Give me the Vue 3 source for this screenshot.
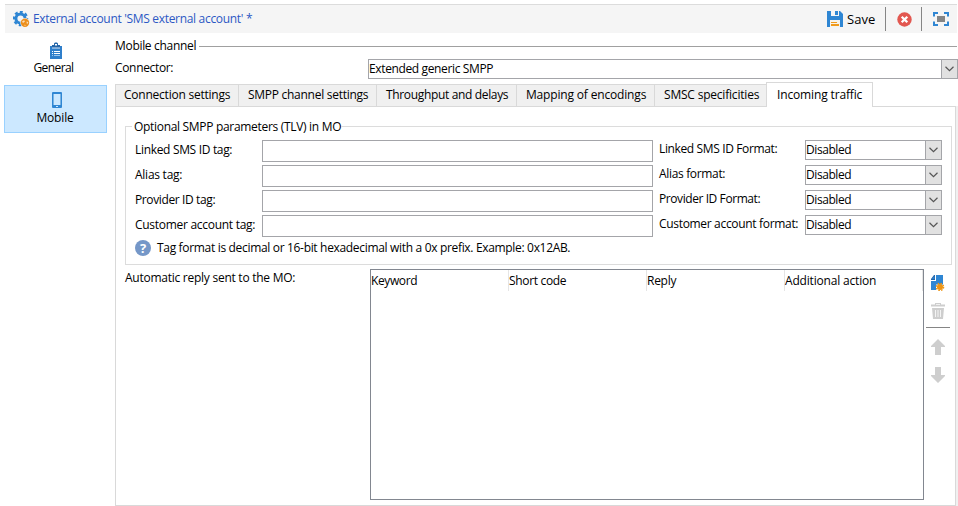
<script setup>
const tabs = [
  { label: 'Connection settings', fit: 106, width: 123 },
  { label: 'SMPP channel settings', fit: 120, width: 138 },
  { label: 'Throughput and delays', fit: 122, width: 140 },
  { label: 'Mapping of encodings', fit: 120, width: 138 },
  { label: 'SMSC specificities', fit: 95, width: 112 },
  { label: 'Incoming traffic', fit: 85, width: 107, active: true },
]
const rows = [
  { tag: 'Linked SMS ID tag:', tagFit: 97, format: 'Linked SMS ID Format:', formatFit: 118 },
  { tag: 'Alias tag:', tagFit: 47, format: 'Alias format:', formatFit: 66 },
  { tag: 'Provider ID tag:', tagFit: 80, format: 'Provider ID Format:', formatFit: 101 },
  { tag: 'Customer account tag:', tagFit: 120, format: 'Customer account format:', formatFit: 139 },
]
const columns = [
  { label: 'Keyword', fit: 46 },
  { label: 'Short code', fit: 57 },
  { label: 'Reply', fit: 29 },
  { label: 'Additional action', fit: 91 },
]

// Spreads or tightens the letters so that the text takes the given width.
const vFit = {
  mounted(el, { value }) {
    const natural = el.getBoundingClientRect().width
    el.style.letterSpacing = `${(value + 0.2 - natural) / el.textContent.length}px`
  },
}
</script>

<template>
  <div class="window">
    <header class="toolbar">
      <svg class="gear" width="17" height="17" viewBox="0 0 17 17">
        <circle cx="7.5" cy="7.5" r="4.600" fill="none" stroke="#2f86d3" stroke-width="3" />
        <circle cx="7.5" cy="7.5" r="6.500" fill="none" stroke="#2f86d3" stroke-width="2.400" stroke-dasharray="2.900 2.205" stroke-dashoffset="1.450" />
        <circle cx="12" cy="11.800" r="4.700" fill="#f5f5f5" />
        <circle cx="12" cy="11.800" r="4.200" fill="#ec8f1c" />
        <path d="M9 10.500l2-1.200 1 .9-1.200 1.600-1.300-.3zM13.500 10.500l1.800.5-.4 1.600-1 .2zM11 13.800l1.600.2-.4 1.200z" fill="#fbdcb4" />
      </svg>
      <span class="title"><span v-fit="219" class="t">External account 'SMS external account' *</span></span>
      <div class="actions">
        <svg class="save-icon" width="16" height="16" viewBox="0 0 16 16">
          <path d="M0 0h13l3 3v13H0z" fill="#2f86d3" />
          <path d="M4 0h8v5H4z" fill="#f5f5f5" />
          <path d="M8 0h3v4H8z" fill="#2f86d3" />
          <path d="M3 9h10v7H3z" fill="#f8f4ec" />
          <path d="M4 11h6v1H4zM4 13h8v2H4z" fill="#f09a1c" />
        </svg>
        <span v-fit="28" class="t save">Save</span>
        <i class="divider"></i>
        <svg class="close" width="15" height="15" viewBox="0 0 15 15">
          <circle cx="7.5" cy="7.5" r="7.200" fill="#e25750" />
          <path d="M4.700 4.700l5.600 5.600M10.300 4.700l-5.600 5.600" stroke="#fff" stroke-width="2.300" />
        </svg>
        <i class="divider"></i>
        <svg class="expand" width="16" height="14" viewBox="0 0 16 14">
          <path d="M1 4.500V1h4M11 1h4v3.500M15 9.500V13h-4M5 13H1V9.500" fill="none" stroke="#2f86d3" stroke-width="2" />
          <path d="M4 4h8v6H4z" fill="#858585" />
        </svg>
      </div>
    </header>

    <div class="body">
      <nav class="side">
        <div class="tile">
          <svg width="12" height="17" viewBox="0 0 12 17">
            <path d="M0 4h12v13H0z" fill="#2f7fcb" />
            <path d="M2 3h2V1.500L5 .5h2l1 1V3h2v3H2z" fill="#2465a8" />
            <path d="M5 2h2v1.500H5z" fill="#fff" />
            <path d="M2 5.500h8v1H2z" fill="#d9e9f8" />
            <path d="M2 9h1v1H2zM4 9h6v1H4zM2 11h1v1H2zM4 11h6v1H4z" fill="#fff" />
            <path d="M2 13h1v1H2zM4 13h6v1H4z" fill="#9cc6ec" />
          </svg>
          <span v-fit="40" class="t">General</span>
        </div>
        <div class="tile selected">
          <svg width="10" height="16" viewBox="0 0 10 16">
            <rect width="10" height="16" rx="1" fill="#2f86d3" />
            <path d="M1 2h8v11H1z" fill="#cce8ff" />
            <path d="M1 2h1v11H1zM8 2h1v11H8z" fill="#78b3e4" />
            <path d="M4 14h2v1H4z" fill="#cce8ff" />
          </svg>
          <span v-fit="37" class="t">Mobile</span>
        </div>
      </nav>

      <main class="main">
        <div class="section"><span v-fit="81" class="t">Mobile channel</span><i></i></div>
        <div class="connector">
          <span v-fit="58" class="t">Connector:</span>
          <div class="select wide">
            <span class="value"><span v-fit="124" class="t">Extended generic SMPP</span></span>
            <span class="arrow"><svg width="9" height="6" viewBox="0 0 9 6"><path d="M.5 .8L4.500 4.600 8.500 .8" /></svg></span>
          </div>
        </div>

        <div class="tabs">
          <div v-for="tab in tabs" :key="tab.label" class="tab" :class="{ active: tab.active }" :style="{ width: tab.width + 'px' }">
            <span v-fit="tab.fit" class="t">{{ tab.label }}</span>
          </div>
        </div>

        <div class="panel-wrap">
          <div class="panel">
            <section class="group">
              <div class="legend"><i class="lead"></i><span v-fit="207" class="t">Optional SMPP parameters (TLV) in MO</span><i class="rest"></i></div>
              <div class="group-body">
                <div v-for="row in rows" :key="row.tag" class="row">
                  <div class="tag"><span v-fit="row.tagFit" class="t">{{ row.tag }}</span></div>
                  <div class="input"></div>
                  <div class="format"><span v-fit="row.formatFit" class="t">{{ row.format }}</span></div>
                  <div class="select">
                    <span class="value"><span v-fit="45" class="t">Disabled</span></span>
                    <span class="arrow"><svg width="9" height="6" viewBox="0 0 9 6"><path d="M.5 .8L4.500 4.600 8.500 .8" /></svg></span>
                  </div>
                </div>
                <div class="hint">
                  <span class="help">?</span>
                  <span v-fit="413" class="t">Tag format is decimal or 16-bit hexadecimal with a 0x prefix. Example: 0x12AB.</span>
                </div>
              </div>
            </section>

            <section class="replies">
              <div class="reply-label"><span v-fit="170" class="t">Automatic reply sent to the MO:</span></div>
              <div class="table">
                <div v-for="column in columns" :key="column.label" class="column"><span v-fit="column.fit" class="t">{{ column.label }}</span></div>
              </div>
              <div class="tools">
                <svg class="add" width="14" height="16" viewBox="0 0 14 16">
                  <path d="M5 0h7v15H0V6h5z" fill="#2f86d3" />
                  <path d="M4 0v5H0V4l3-4z" fill="#2465a8" />
                  <path d="M1 4l2.500-3v3z" fill="#2f86d3" />
                  <path d="M5 9h9v7H5z" fill="#fff" />
                  <path d="M5 9h7v1H5z" fill="#8dbce6" />
                  <circle cx="9" cy="12" r="3" fill="#ee9412" />
                  <circle cx="9" cy="12" r="3.600" fill="none" stroke="#ee9412" stroke-width="1.400" stroke-dasharray="1.500 1.327" />
                </svg>
                <svg class="trash" width="14" height="16" viewBox="0 0 14 16">
                  <path d="M0 1.500h4V0h6v1.500h4v2H0zM1 5h12l-1 11H2z" fill="#cecece" />
                  <path d="M5 1h4v.700H5z" fill="#fff" />
                  <path d="M4.500 7v7M7 7v7M9.500 7v7" stroke="#f4f4f4" stroke-width="1" />
                </svg>
                <i class="rule"></i>
                <svg class="up" width="14" height="16" viewBox="0 0 14 16"><path d="M7 0l7 7v1h-4v8H4V8H0V7z" fill="#cecece" /></svg>
                <svg class="down" width="14" height="16" viewBox="0 0 14 16"><path d="M7 16l7-7V8h-4V0H4v8H0v1z" fill="#cecece" /></svg>
              </div>
            </section>
          </div>
        </div>
      </main>
    </div>
  </div>
</template>

<style>
body {
  background: #fff;
  overflow: hidden;
}
</style>

<style scoped>
* {
  box-sizing: border-box;
}
.window {
  width: 958px;
  height: 506px;
  padding-top: 4px;
  background: #fff;
  color: #000;
  font: 12px/16px "Open Sans", "Noto Sans", sans-serif;
}
svg {
  display: block;
  flex: none;
}
.t {
  display: inline-block;
  white-space: nowrap;
  flex: none;
}
.toolbar {
  display: flex;
  align-items: center;
  height: 29px;
  margin: 0 1px 0 5px;
  padding-left: 8px;
  background: #f5f5f5;
  border-top: 1px solid #dcdcdc;
}
.title {
  margin-left: 3px;
  color: #2c58c4;
}
.actions {
  display: flex;
  align-items: center;
  height: 28px;
  margin-left: auto;
  padding-right: 8px;
}
.save {
  margin-left: 4px;
  width: 28px;
  font-size: 13px;
}
.divider {
  width: 1px;
  height: 24px;
  background: #858585;
}
.save + .divider {
  margin-left: 10px;
}
.close {
  margin: 0 9px 0 11px;
}
.expand {
  margin-left: 11px;
}
.body {
  display: flex;
  height: 473px;
}
.side {
  flex: none;
  width: 111px;
  padding: 2px 0 0 4px;
}
.tile {
  display: flex;
  flex-direction: column;
  align-items: center;
  width: 103px;
  height: 48px;
  padding: 7px 4px 0 0;
}
.tile svg {
  margin-left: 4px;
}
.tile .t {
  margin-top: 1px;
}
.tile.selected {
  margin-top: 2px;
  padding: 6px 0 0;
  border: 1px solid #99d1ff;
  background: #cce8ff;
}
.tile.selected svg {
  margin-left: 2px;
}
.tile.selected .t {
  margin-top: 2px;
  margin-right: 1px;
}
.main {
  display: flex;
  flex: none;
  flex-direction: column;
  width: 843px;
  margin-left: 4px;
  padding-top: 5px;
}
.section {
  display: flex;
  align-items: center;
  width: 842px;
  height: 16px;
}
.section i {
  flex: 1;
  height: 1px;
  margin-left: 3px;
  background: #a0a0a0;
}
.connector {
  display: flex;
  justify-content: space-between;
  width: 843px;
  height: 20px;
  margin-top: 5px;
}
.connector > .t {
  margin-top: 1px;
}
.select {
  display: flex;
  width: 137px;
  height: 20px;
  border: 1px solid #a4a5a9;
  background: #fff;
}
.select.wide {
  width: 590px;
}
.value {
  flex: 1;
  line-height: 18px;
}
.arrow {
  display: flex;
  align-items: center;
  justify-content: center;
  width: 16px;
  border-left: 1px solid #a4a5a9;
  background: #e1e1e1;
}
.arrow path {
  fill: none;
  stroke: #555;
  stroke-width: 1.2;
}
.tabs {
  display: flex;
  align-items: flex-end;
  height: 25px;
  margin-top: 3px;
  margin-bottom: -1px;
  z-index: 1;
}
.tab {
  flex: none;
  height: 23px;
  padding: 2px 0 0 9px;
  border: solid #d9d9d9;
  border-width: 1px 0 1px 1px;
  background: #f0f0f0;
}
.tab:first-child {
  padding-left: 8px;
}
.tab.active {
  height: 25px;
  padding: 4px 0 0 10px;
  border-width: 1px 1px 0 1px;
  background: #fff;
}
.panel-wrap {
  width: 843px;
  height: 400px;
  padding-right: 2px;
  background: #f0f0f0;
}
.panel {
  height: 400px;
  padding: 13px 3px 0 9px;
  border: 1px solid #d9d9d9;
  background: #fff;
}
.group {
  width: 827px;
}
.legend {
  display: flex;
  align-items: center;
  height: 13px;
}
.legend i {
  height: 1px;
  background: #dcdcdc;
}
.lead {
  width: 7px;
  margin-right: 2px;
}
.rest {
  flex: 1;
}
.group-body {
  height: 138px;
  margin-top: -6px;
  padding: 13px 9px 0;
  border: 1px solid #dcdcdc;
  border-top: 0;
}
.row {
  display: flex;
  height: 25px;
}
.tag {
  width: 127px;
  padding-top: 2px;
}
.input {
  width: 391px;
  height: 22px;
  border: 1px solid #a4a5a9;
}
.format {
  width: 152px;
  padding: 1px 0 0 6px;
}
.hint {
  display: flex;
  align-items: center;
  height: 16px;
}
.help {
  width: 16px;
  height: 16px;
  margin-right: 6px;
  border-radius: 50%;
  background: #7597c8;
  color: #fff;
  font-weight: 700;
  font-size: 13px;
  text-align: center;
}
.replies {
  display: flex;
  margin-top: 4px;
}
.reply-label {
  width: 245px;
  padding-top: 1px;
}
.table {
  display: flex;
  width: 554px;
  height: 231px;
  border: 1px solid #828790;
}
.column {
  width: 138px;
  height: 21px;
  padding-top: 3px;
  border-right: 1px solid #e5e5e5;
}
.tools {
  display: flex;
  flex-direction: column;
  align-items: center;
  width: 24px;
  margin-left: 2px;
  padding-top: 6px;
}
.trash {
  margin-top: 12px;
}
.rule {
  width: 24px;
  height: 1px;
  margin-top: 8px;
  background: #858585;
}
.up {
  margin-top: 11px;
}
.down {
  margin-top: 12px;
}
</style>
